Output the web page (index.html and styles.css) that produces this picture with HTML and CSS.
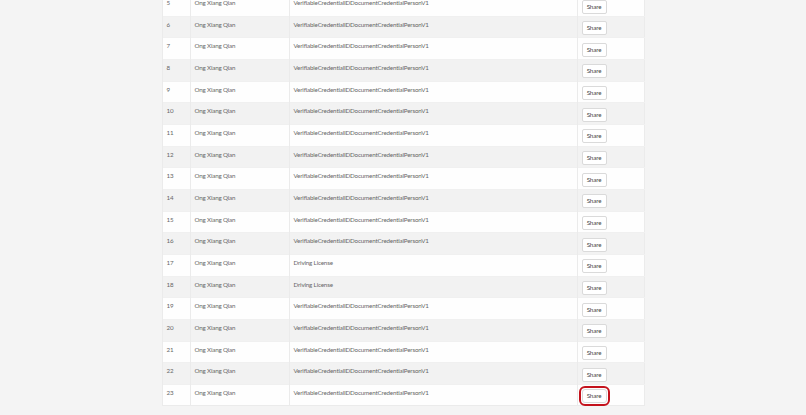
FILE: index.html
```html
<!DOCTYPE html>
<html>
<head>
<meta charset="utf-8">
<link rel="stylesheet" href="styles.css">
</head>
<body>
<div class="wrap">
<table class="grid">
<colgroup><col class="c-num"><col class="c-name"><col class="c-type"><col class="c-act"></colgroup>
<tbody>
<tr><td>5</td><td>Ong Xiang Qian</td><td>VerifiableCredentialIDDocumentCredentialPersonV1</td><td><button class="btn">Share</button></td></tr>
<tr><td>6</td><td>Ong Xiang Qian</td><td>VerifiableCredentialIDDocumentCredentialPersonV1</td><td><button class="btn">Share</button></td></tr>
<tr><td>7</td><td>Ong Xiang Qian</td><td>VerifiableCredentialIDDocumentCredentialPersonV1</td><td><button class="btn">Share</button></td></tr>
<tr><td>8</td><td>Ong Xiang Qian</td><td>VerifiableCredentialIDDocumentCredentialPersonV1</td><td><button class="btn">Share</button></td></tr>
<tr><td>9</td><td>Ong Xiang Qian</td><td>VerifiableCredentialIDDocumentCredentialPersonV1</td><td><button class="btn">Share</button></td></tr>
<tr><td>10</td><td>Ong Xiang Qian</td><td>VerifiableCredentialIDDocumentCredentialPersonV1</td><td><button class="btn">Share</button></td></tr>
<tr><td>11</td><td>Ong Xiang Qian</td><td>VerifiableCredentialIDDocumentCredentialPersonV1</td><td><button class="btn">Share</button></td></tr>
<tr><td>12</td><td>Ong Xiang Qian</td><td>VerifiableCredentialIDDocumentCredentialPersonV1</td><td><button class="btn">Share</button></td></tr>
<tr><td>13</td><td>Ong Xiang Qian</td><td>VerifiableCredentialIDDocumentCredentialPersonV1</td><td><button class="btn">Share</button></td></tr>
<tr><td>14</td><td>Ong Xiang Qian</td><td>VerifiableCredentialIDDocumentCredentialPersonV1</td><td><button class="btn">Share</button></td></tr>
<tr><td>15</td><td>Ong Xiang Qian</td><td>VerifiableCredentialIDDocumentCredentialPersonV1</td><td><button class="btn">Share</button></td></tr>
<tr><td>16</td><td>Ong Xiang Qian</td><td>VerifiableCredentialIDDocumentCredentialPersonV1</td><td><button class="btn">Share</button></td></tr>
<tr><td>17</td><td>Ong Xiang Qian</td><td>Driving License</td><td><button class="btn">Share</button></td></tr>
<tr><td>18</td><td>Ong Xiang Qian</td><td>Driving License</td><td><button class="btn">Share</button></td></tr>
<tr><td>19</td><td>Ong Xiang Qian</td><td>VerifiableCredentialIDDocumentCredentialPersonV1</td><td><button class="btn">Share</button></td></tr>
<tr><td>20</td><td>Ong Xiang Qian</td><td>VerifiableCredentialIDDocumentCredentialPersonV1</td><td><button class="btn">Share</button></td></tr>
<tr><td>21</td><td>Ong Xiang Qian</td><td>VerifiableCredentialIDDocumentCredentialPersonV1</td><td><button class="btn">Share</button></td></tr>
<tr><td>22</td><td>Ong Xiang Qian</td><td>VerifiableCredentialIDDocumentCredentialPersonV1</td><td><button class="btn">Share</button></td></tr>
<tr><td>23</td><td>Ong Xiang Qian</td><td>VerifiableCredentialIDDocumentCredentialPersonV1</td><td><button class="btn btn-marked">Share</button></td></tr>
</tbody>
</table>
</div>
</body>
</html>
```
FILE: styles.css
```css
html, body {
  margin: 0;
  padding: 0;
  background: #f4f4f4;
  overflow: hidden;
}
body {
  font-family: Lato, "Open Sans", sans-serif;
  font-size: 6.2px;
  letter-spacing: -0.15px;
  color: #666;
}
.wrap {
  margin-top: -6px;
  padding-left: 162px;
}
.grid {
  width: 482px;
  border-collapse: collapse;
  table-layout: fixed;
  border: 1px solid #ebebeb;
}
.c-num { width: 28px; }
.c-name { width: 99px; }
.c-type { width: 288px; }
.c-act { width: 67px; }
.grid tr {
  height: 21.67px;
}
.grid tr:nth-child(odd) { background: #fefefe; }
.grid tr:nth-child(even) { background: #f2f2f2; }
.grid td {
  padding: 4px 3px 0 3.5px;
  vertical-align: top;
  line-height: 8px;
  border-left: 1px solid #ebebeb;
  border-top: 1px solid #f0f0f0;
  white-space: nowrap;
  box-sizing: border-box;
}
.btn {
  display: inline-block;
  font-family: inherit;
  font-size: 6.2px;
  letter-spacing: -0.1px;
  color: #444;
  background: #fff;
  border: 1px solid #dadada;
  border-radius: 2px;
  width: 25px;
  height: 14px;
  padding: 0;
  margin-top: 0.5px;
  line-height: 12px;
}
.btn-marked {
  outline: 2px solid #c4121c;
  outline-offset: 1px;
  border-radius: 3px;
}
```
